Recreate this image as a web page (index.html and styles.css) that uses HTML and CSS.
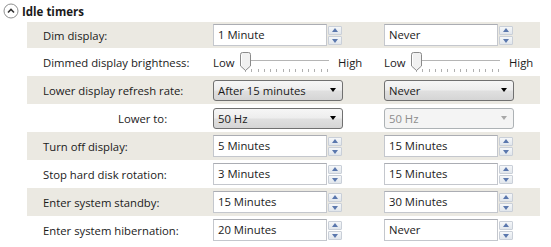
FILE: index.html
```html
<!DOCTYPE html>
<html>
<head>
<meta charset="utf-8">
<link rel="stylesheet" href="styles.css">
</head>
<body>
<div class="panel">
  <div class="header">
    <span class="toggle">
      <svg width="16" height="16" viewBox="0 0 16 16">
        <circle cx="8" cy="8" r="7" fill="#fff" stroke="#8e8f8f" stroke-width="1"/>
        <path d="M5 9.5 L8 6.5 L11 9.5" fill="none" stroke="#333" stroke-width="1.6"/>
      </svg>
    </span>
    <span class="title">Idle timers</span>
  </div>
  <div class="rows">
    <div class="row shaded first">
      <div class="label">Dim display:</div>
      <div class="spin"><div class="box">1 Minute</div><div class="btns"><span class="up"></span><span class="down"></span></div></div>
      <div class="spin"><div class="box">Never</div><div class="btns"><span class="up"></span><span class="down"></span></div></div>
    </div>
    <div class="row">
      <div class="label">Dimmed display brightness:</div>
      <div class="slider"><span class="lo">Low</span><div class="track"><span class="thumb"><svg width="11" height="19" viewBox="0 0 11 19"><path d="M0.5 2.5 Q0.5 0.5 2.5 0.5 L8.5 0.5 Q10.5 0.5 10.5 2.5 L10.5 14 L5.5 18.5 L0.5 14 Z" fill="#f1f1f1" stroke="#8a8a8a"/><path d="M1.5 3 L1.5 13.5" stroke="#fff"/></svg></span></div><span class="hi">High</span></div>
      <div class="slider"><span class="lo">Low</span><div class="track"><span class="thumb"><svg width="11" height="19" viewBox="0 0 11 19"><path d="M0.5 2.5 Q0.5 0.5 2.5 0.5 L8.5 0.5 Q10.5 0.5 10.5 2.5 L10.5 14 L5.5 18.5 L0.5 14 Z" fill="#f1f1f1" stroke="#8a8a8a"/><path d="M1.5 3 L1.5 13.5" stroke="#fff"/></svg></span></div><span class="hi">High</span></div>
    </div>
    <div class="row shaded">
      <div class="label">Lower display refresh rate:</div>
      <div class="combo">After 15 minutes<span class="arrow"></span></div>
      <div class="combo">Never<span class="arrow"></span></div>
    </div>
    <div class="row">
      <div class="label indent">Lower to:</div>
      <div class="combo">50 Hz<span class="arrow"></span></div>
      <div class="combo disabled">50 Hz<span class="arrow"></span></div>
    </div>
    <div class="row shaded">
      <div class="label">Turn off display:</div>
      <div class="spin"><div class="box">5 Minutes</div><div class="btns"><span class="up"></span><span class="down"></span></div></div>
      <div class="spin"><div class="box">15 Minutes</div><div class="btns"><span class="up"></span><span class="down"></span></div></div>
    </div>
    <div class="row">
      <div class="label">Stop hard disk rotation:</div>
      <div class="spin"><div class="box">3 Minutes</div><div class="btns"><span class="up"></span><span class="down"></span></div></div>
      <div class="spin"><div class="box">15 Minutes</div><div class="btns"><span class="up"></span><span class="down"></span></div></div>
    </div>
    <div class="row shaded">
      <div class="label">Enter system standby:</div>
      <div class="spin"><div class="box">15 Minutes</div><div class="btns"><span class="up"></span><span class="down"></span></div></div>
      <div class="spin"><div class="box">30 Minutes</div><div class="btns"><span class="up"></span><span class="down"></span></div></div>
    </div>
    <div class="row">
      <div class="label">Enter system hibernation:</div>
      <div class="spin"><div class="box">20 Minutes</div><div class="btns"><span class="up"></span><span class="down"></span></div></div>
      <div class="spin"><div class="box">Never</div><div class="btns"><span class="up"></span><span class="down"></span></div></div>
    </div>
  </div>
</div>
</body>
</html>
```

FILE: styles.css
```css
html, body {
  margin: 0;
  padding: 0;
  background: #fff;
}
body {
  font-family: "Open Sans", "Noto Sans", sans-serif;
  font-size: 11.3px;
  color: #1a1a1a;
  width: 551px;
  height: 247px;
  overflow: hidden;
}
.header {
  height: 22px;
  display: flex;
  align-items: center;
  padding-left: 3px;
  gap: 3px;
}
.toggle {
  display: flex;
  width: 16px;
  height: 16px;
}
.title {
  font-weight: bold;
  font-size: 11.5px;
}
.rows {
  margin-left: 27px;
  width: 513px;
}
.row {
  display: grid;
  grid-template-columns: 145px 130px 130px;
  column-gap: 41px;
  align-items: center;
  height: 28px;
}
.row.first {
  height: 26px;
}
.shaded {
  background: #ebe9e2;
}
.label {
  padding-left: 16px;
  white-space: nowrap;
}
.label.indent {
  padding-left: 91px;
}
.spin {
  display: flex;
  align-items: center;
  gap: 1px;
}
.box {
  width: 114px;
  height: 22px;
  box-sizing: border-box;
  border: 1px solid #c4c7cd;
  border-top-color: #abadb3;
  background: #fff;
  padding-left: 4px;
  line-height: 20px;
  white-space: nowrap;
}
.btns {
  display: flex;
  flex-direction: column;
  gap: 1px;
  width: 14px;
}
.btns span {
  position: relative;
  height: 9px;
  box-sizing: border-box;
  border: 1px solid #c9cfd8;
  background: linear-gradient(#f5f7f9, #e1e6ec);
  border-radius: 1px;
}
.btns span::after {
  content: "";
  position: absolute;
  left: 3px;
  width: 0;
  height: 0;
  border-left: 3px solid transparent;
  border-right: 3px solid transparent;
}
.btns .up::after {
  top: 1px;
  border-bottom: 4px solid #5a77ad;
}
.btns .down::after {
  top: 2px;
  border-top: 4px solid #5a77ad;
}
.combo {
  position: relative;
  height: 21px;
  box-sizing: border-box;
  border: 1px solid #707070;
  border-radius: 3px;
  background: linear-gradient(#f6f6f6 0%, #ededed 48%, #e0e0e0 52%, #d5d5d5 100%);
  padding-left: 4px;
  line-height: 19px;
  white-space: nowrap;
}
.combo .arrow {
  position: absolute;
  right: 6px;
  top: 7px;
  width: 0;
  height: 0;
  border-left: 3.5px solid transparent;
  border-right: 3.5px solid transparent;
  border-top: 4px solid #000;
}
.combo.disabled {
  border-color: #adb2b5;
  background: #f4f4f4;
  color: #8d8d8d;
}
.combo.disabled .arrow {
  border-top-color: #a8a8a8;
}
.slider {
  display: flex;
  align-items: center;
  width: 151px;
  height: 22px;
}
.lo {
  width: 27px;
}
.track {
  position: relative;
  width: 89px;
  height: 22px;
  margin-right: 9px;
  background:
    linear-gradient(#b5b5b5, #b5b5b5) 6px 9px / 83px 1px no-repeat,
    linear-gradient(#fff, #fff) 6px 10px / 83px 1px no-repeat,
    repeating-linear-gradient(90deg, #b0b0b0 0 1px, transparent 1px 6.3px) 5px 18px / 85px 3px no-repeat;
}
.thumb {
  position: absolute;
  left: 0;
  top: 1px;
  display: flex;
}
.hi {
  white-space: nowrap;
}
```
